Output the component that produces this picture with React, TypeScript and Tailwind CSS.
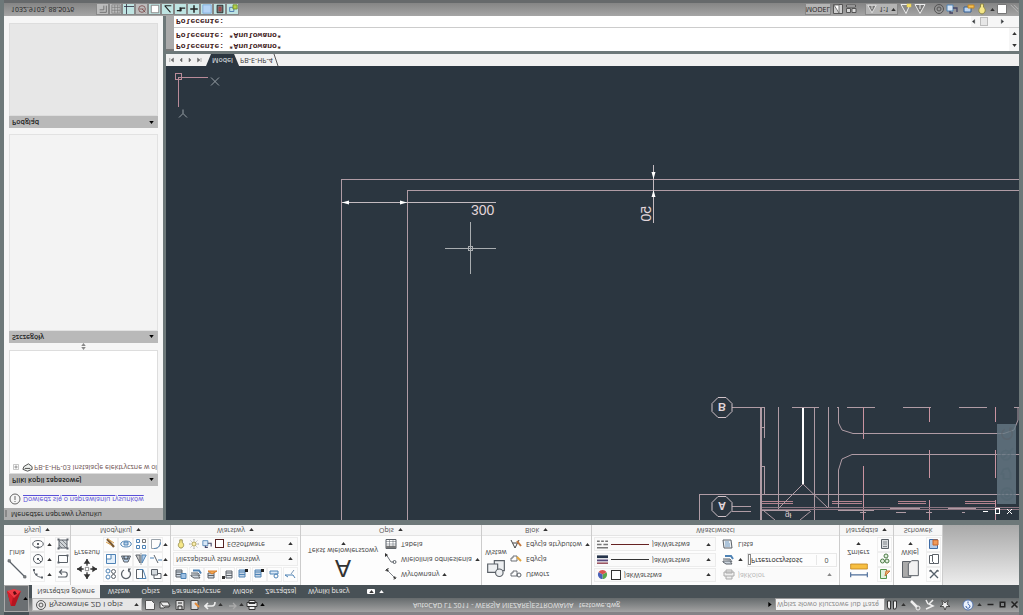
import type { ReactNode } from 'react';

type Shape = { d: string; c?: string; f?: string; w?: number };

const GREY = '#5b6168';
const BLUE = '#4f83b5';

function Icon({ shapes, size = 'size-3', className = '' }: { shapes: Shape[]; size?: string; className?: string }) {
  return (
    <svg viewBox="0 0 12 12" className={`shrink-0 ${size} ${className}`} aria-hidden="true">
      {shapes.map((s, i) => (
        <path key={i} d={s.d} stroke={s.c ?? GREY} fill={s.f ?? 'none'} strokeWidth={s.w ?? 1} />
      ))}
    </svg>
  );
}

function Caret({ up = false, className = 'text-[#333]' }: { up?: boolean; className?: string }) {
  return (
    <svg viewBox="0 0 6 4" className={`w-[5px] h-[3px] shrink-0 ${className}`} aria-hidden="true">
      <path d={up ? 'M0 4L3 0L6 4Z' : 'M0 0L3 4L6 0Z'} fill="currentColor" />
    </svg>
  );
}

const ic: Record<string, Shape[]> = {
  line: [{ d: 'M1.5 10.5L10.5 1.5', w: 0.7 }, { d: 'M.6 10.2h1.4v1.4H.6zM10 .6h1.4V2H10z', f: '#888', w: 0.4 }],
  arc: [{ d: 'M2 10C2 6 5 3 10 2.5' }, { d: 'M1 9h2v2H1zM9 1.5h2v2H9zM3.5 4.5h2v2h-2z', f: GREY, w: 0 }],
  circle: [{ d: 'M6 1.5a4.5 4.5 0 100 9a4.5 4.5 0 100-9M6 6L9 3' }, { d: 'M5 5h2v2H5z', f: GREY, w: 0 }],
  ellipse: [{ d: 'M6 2.5c7 0 7 7 0 7s-7-7 0-7' }, { d: 'M5 5h2v2H5zM5 1.5h2v2H5z', f: GREY, w: 0 }],
  pline: [{ d: 'M1 3h7c3 0 3 5 0 5H3M5 5.5L2.5 8L5 10.5', w: 1.2 }],
  rect: [{ d: 'M1.5 2.5h9v7h-9z' }, { d: 'M.5 1.5h2v2h-2zM9.500 8.500h2v2h-2z', f: GREY, w: 0 }],
  hatch: [{ d: 'M2 2h8v8H2z', f: '#cfd3d6' }, { d: 'M2 5l3-3M2 9l7-7M5 10l5-5', w: 0.7 }, { d: 'M.5.5h2v2h-2zM9.500.500h2v2h-2zM.5 9.500h2v2h-2zM9.500 9.500h2v2h-2z', f: GREY, w: 0 }],
  move: [{ d: 'M6 0v4M6 8v4M0 6h4M8 6h4', c: '#333', w: 0.8 }, { d: 'M6 0L4 2.800h4zM6 12l-2-2.800h4zM0 6l2.800-2v4zM12 6L9.200 4v4z', f: '#333', w: 0 }, { d: 'M5 5h2v2H5z', c: '#777', w: 0.5 }],
  copy: [{ d: 'M3 1a2 2 0 100 4a2 2 0 100-4M3 7a2 2 0 100 4a2 2 0 100-4', c: BLUE }, { d: 'M8.500 1.500a2 2 0 100 4a2 2 0 100-4M8.500 6.500a2 2 0 100 4a2 2 0 100-4' }],
  rotate: [{ d: 'M4 10A4.500 4.500 0 118 10', w: 1.3 }, { d: 'M8 7.500v4h3z', f: GREY, w: 0 }],
  stretch: [{ d: 'M1.500 1.500h6v9h-6z' }, { d: 'M4 1.500h7l-3 9H4', c: BLUE }],
  offset: [{ d: 'M4 1.500h7v5H4z' }, { d: 'M1.500 5h6v5.500h-6z', f: '#d5dade' }],
  scale: [{ d: 'M1.500 1.500h9v9h-9z', c: BLUE, f: '#e3effa' }, { d: 'M1.500 6h4.500v4.500H1.500z', f: '#fff', c: BLUE }],
  trim: [{ d: 'M1.500 9h9L8 3H4z', f: '#b9d1ea' }, { d: 'M4 9V6h4v3', c: '#333' }],
  mirror: [{ d: 'M5 2v8H.8z', f: '#ccc' }, { d: 'M7 2v8h4.200z', c: BLUE, f: '#b9d1ea' }, { d: 'M6 0v12', w: 0.6 }],
  breakk: [{ d: 'M0 7h4M8 5h4', c: BLUE }, { d: 'M4 10l4-8', w: 1 }],
  erase: [{ d: 'M2 11l7-8', c: '#7b5a33', w: 2.2 }, { d: 'M1 8l5-3M3 11l6-4', c: '#d89c45' }],
  explode: [{ d: 'M6 3c7 0 7 6 0 6s-7-6 0-6', c: BLUE }, { d: 'M4 5h4v3H4z', c: BLUE, f: '#b9d1ea' }],
  array: [{ d: 'M1.500 1.500h3v3h-3zM7.500 1.500h3v3h-3zM1.500 7.500h3v3h-3z', c: BLUE }, { d: 'M7.500 7.500h3v3h-3z', c: '#777' }],
  fillet: [{ d: 'M1.500 10.500v-9h3c4 0 6 3 6 9z', c: '#9aa2aa' }, { d: 'M4 1.500c4 0 6 2 6.500 6', c: BLUE }],
  lay: [{ d: 'M1 3h6v7H1zM1 5.500h6M1 8h6', f: '#cdd6df' }, { d: 'M6 1.500h5v5H6z', c: BLUE, f: '#9fc1e4' }],
  lay2: [{ d: 'M1 4l3-2h6L8 5H1zM1 7h7l2-3', f: '#cdd6df' }, { d: 'M3 9.500h6l2-3', c: BLUE, w: 2 }],
  lay3: [{ d: 'M2 2h6v5H2zM2 4.500h6', f: '#cdd6df' }, { d: 'M2 9l4-3l5 3z', c: '#d87f2d', f: '#f3aa55' }],
  lay4: [{ d: 'M4 2h6v7H4zM4 4.500h6M4 7h6', f: '#e2e6ea' }, { d: 'M0 1h3v3H0z', f: '#333', w: 0 }],
  lay5: [{ d: 'M2 3h6v7H2zM2 5.500h6M2 8h6', f: '#c3d3e4', c: BLUE }, { d: 'M8 8h3v3H8z', f: '#222', w: 0 }],
  lay6: [{ d: 'M1 6h8v3H1z', c: BLUE, f: '#dbe9f7' }, { d: 'M7 2a2 2 0 100 4a2 2 0 100-4', c: BLUE }],
  lay7: [{ d: 'M1 5h8l2-3M1 5l3-2', c: BLUE }, { d: 'M7 6l3 4', c: '#7a98b8' }],
  bulb: [{ d: 'M6 1c4 1 4 5 1.500 7v3h-3V8C2 6 2 2 6 1', c: '#8c8648', f: '#f6e788' }],
  sun: [{ d: 'M6 3.500a2.500 2.500 0 100 5a2.500 2.500 0 100-5', c: '#9b8f3f', f: '#fbeeb0' }, { d: 'M6 0v2M6 10v2M0 6h2M10 6h2M2 2l1 1M10 2L9 3M2 10l1-1M10 10L9 9', w: 0.7 }],
  lock: [{ d: 'M1 4h6v6H1z', c: BLUE, f: '#d9e7f6' }, { d: 'M7 7h4V3M4 4V2h3', c: '#446', w: 1.300 }],
  dim: [{ d: 'M1 11l9-9', w: 0.8 }, { d: 'M9 .500l2 2M.500 9l3 3', c: '#222', w: 1 }, { d: 'M8 2l3-1l-1 3zM2 8l-1 3l3-1z', f: '#333', w: 0 }],
  leader: [{ d: 'M9 3H6L1.500 10', w: 0.9 }, { d: 'M9.500 1.500a1.500 1.500 0 100 3a1.500 1.500 0 100-3' }, { d: 'M0 8v4l3-2z', f: '#333', w: 0 }],
  table: [{ d: 'M1 1.500h10v9H1z', f: '#fff' }, { d: 'M1 3h10', w: 2.500, c: '#777' }, { d: 'M1 6h10M1 8.500h10M4.500 3v7.500M8 3v7.500', w: 0.5 }],
  insert: [{ d: 'M1 4h6v5H1zM6 5h5v6H5V9', f: '#eef0f2', w: 0.7 }, { d: 'M8 1.500a2 2 0 100 4.500a2 2 0 100-4.500', w: 0.7, f: '#eef0f2' }],
  create: [{ d: 'M1 4h6v5H3V7H1z', w: 0.9 }, { d: 'M9 3a2 2 0 100 4a2 2 0 100-4' }],
  edit: [{ d: 'M1 4h6v5H3V7H1z', w: 0.9 }, { d: 'M7 8l4-4', c: '#e3a53c', w: 2 }],
  attr: [{ d: 'M1 10l4-8l4 8M3 7h4', c: '#444' }, { d: 'M7 9l4-5', c: '#c5793d', w: 2 }],
  weights: [{ d: 'M0 2h12', c: '#8a3a49', w: 1.5 }, { d: 'M0 5h12', c: '#56477a', w: 2 }, { d: 'M0 9h12', c: '#25344a', w: 3 }],
  ltypes: [{ d: 'M0 2.500h12M0 6h5M7 6h5M0 9.500h3M4.500 9.500h3M9 9.500h3', c: '#777', w: 1.500 }],
  transp: [{ d: 'M1 4l3-2h6L8 5H1zM1 7h7l2-3', f: '#cdd6df' }, { d: 'M3 10h6l2-3', c: BLUE, w: 2 }],
  list: [{ d: 'M2 2h8l-1 8H1z', f: '#edf0f3' }, { d: 'M3 4h5M3 6h5M3 8h4', c: BLUE, w: 0.8 }],
  printer: [{ d: 'M1 5h10v4H1zM3 5V2h6v3M3 8h6v3H3z', c: '#aaa', f: '#eee' }],
  measure: [{ d: 'M1 2.500h10M1 1v3M11 1v3', c: '#4f6f9a', w: 0.7 }, { d: 'M1 6h10v3H1z', c: '#c08520', f: '#f7bf41', w: 0.5 }],
  pick: [{ d: 'M1.500 1.500h6v9h-6z', c: '#55934c', f: '#dff0dc' }, { d: 'M6 4l5 5l-4 0z', c: '#c5793d', f: '#f0b070' }],
  group: [{ d: 'M3.500 2a2 2 0 100 4a2 2 0 100-4M8 2a2 2 0 100 4a2 2 0 100-4M7 7a2 2 0 100 4a2 2 0 100-4', c: '#4b7a45', f: '#e1efdf' }],
  calc: [{ d: 'M2.500 1.500h7v9h-7z', f: '#d8dbde' }, { d: 'M4 3.500h4M4 6h4M4 8h4', w: 0.7 }],
  paste: [{ d: 'M1.500 1h5v9.500h-5z', f: '#aaa', w: 0.6 }, { d: 'M5 2h6v9H7L5 9z', f: '#f2f2f2', w: 0.6 }],
  cut: [{ d: 'M2 2l8 8M10 2l-8 8', c: '#55606b', w: 1.300 }, { d: 'M1 9h3M8 9h3' }],
  pages: [{ d: 'M1.500 1.500h6v8h-6z', f: '#fff' }, { d: 'M4.500 3.500l2-2h4v9h-6z', f: '#fff' }],
  props: [{ d: 'M1.500 1.500h8v9h-8z', c: '#3f6ca6', f: '#b4cbe9' }, { d: 'M5 5h5v5H5z', c: '#c5642d', f: '#f09a5a' }],
  doc: [{ d: 'M1.500 1.500h9v6l-3 3h-6z', c: '#555', f: '#f3f3f3' }],
  open: [{ d: 'M1 9V3h4l1 1h4v1M1 9l3-4h7L9 9z', c: '#444', f: '#eee' }],
  save: [{ d: 'M2 1.500h8v9H2z', c: '#444', f: '#ddd' }, { d: 'M4 2v3h4V2M4 8h4', c: '#222' }],
  saveas: [{ d: 'M2 1.500h7v9H2z', c: '#444', f: '#ddd' }, { d: 'M6 8l4-4', c: '#e38c3c', w: 2 }],
  undo: [{ d: 'M4 2L1 5l3 3M1 5h7c2 0 3 1 3 4', c: '#eee', w: 1.600 }],
  redo: [{ d: 'M8 2l3 3l-3 3M11 5H4', c: '#aaa', w: 1.300 }],
  plot: [{ d: 'M1 4.500h10v4H1zM3 4.500v-3h6v3M3 7.500h6v3H3z', c: '#333', f: '#eee' }],
  binoc: [{ d: 'M1.500 10V4l1-2h2v8zM10.500 10V4l-1-2h-2v8z', c: '#333', f: '#eee' }],
  key: [{ d: 'M2 10l6-6', c: '#eee', w: 2.500 }, { d: 'M9 1a2 2 0 100 4a2 2 0 100-4', c: '#eee' }],
  sat: [{ d: 'M2 2l7 3l-4 2l4 4M4 7l-2 4', c: '#eee', w: 1.500 }],
  star: [{ d: 'M6 1l1.500 3.500h3.500l-3 2.300l1.200 3.700L6 8.200L2.800 10.500L4 6.800L1 4.500h3.500z', c: '#333', f: '#eee', w: 0.8 }],
  help: [{ d: 'M6 1a5 5 0 100 10a5 5 0 100-10', c: '#5575ae', f: '#eaf1fc' }, { d: 'M4 5c0-3 4-3 4 0c0 1-2 1-2 2.500M6 8v1.500', c: '#3259a5' }],
  gear: [{ d: 'M6 1.500a4.500 4.500 0 100 9a4.500 4.500 0 100-9M6 4a2 2 0 100 4a2 2 0 100-4', c: '#555' }],
  info: [{ d: 'M6 1a5 5 0 100 10a5 5 0 100-10M6 5v4M6 3v1', c: '#555', w: 0.9 }],
  plus: [{ d: 'M3 3h6v6H3z', c: '#aaa', w: 0.8 }, { d: 'M4 6h4M6 4v4', c: '#666', w: 0.8 }],
  dwg: [{ d: 'M1 4l5-2l5 2v3l-4 3l-5-3z', c: '#444', f: '#eef1ee' }, { d: 'M3 5h6', c: '#444' }],
  grid: [{ d: 'M1 1h10v10H1zM1 4.500h10M1 8h10M4.500 1v10M8 1v10', c: '#777', w: 0.8 }],
  snap: [{ d: 'M2 2h8v8M2 5h5v5', c: '#666', w: 1 }],
  ortho: [{ d: 'M3 0v12M0 9h12', c: '#334', w: 1 }],
  polar: [{ d: 'M6 2a4 4 0 100 8a4 4 0 100-8M6 6l4-4M3 6h5', c: '#7b4a4a' }],
  osnap: [{ d: 'M1.500 1.500h9v9h-9z', c: '#777', f: '#fff' }],
  track: [{ d: 'M2 10h8M2 10l7-8', c: '#222', w: 1.300 }],
  ducs: [{ d: 'M1 4h5v3h5M5 3v5', c: '#222', w: 1.600 }],
  dyn: [{ d: 'M6 1.500v9M1.500 6h9', c: '#222', w: 1.800 }],
  lwt: [{ d: 'M1 1h10v10H1z', c: '#7ba6d8', f: '#b4d3f5' }],
  qp: [{ d: 'M2.500 1.500h7v9h-7z', c: '#222', f: '#777' }, { d: 'M5 4h2v4H5z', c: '#b33' }],
  sc: [{ d: 'M2 3h5v5H2z', c: '#3d6ca8' }, { d: 'M6 6h5v5H6z', c: '#6c8a1f', f: '#b7cf4c' }],
  layout: [{ d: 'M1.500 1.500h9v9h-9z', c: '#555', f: '#ccc' }, { d: 'M2 10l5-8v8z', f: '#fff', c: '#777' }],
  views: [{ d: 'M1.500 2.500h4v4h-4zM7 2.500h4v4H7zM1.500 8h9v2h-9z', c: '#555', f: '#d8d8d8' }],
  scale1: [{ d: 'M1 10.500h10L6 1.500zM6 6v4', c: '#eee', f: '#777' }],
  scale2: [{ d: 'M1 10.500h9L6 1.500z', c: '#eee', f: '#888' }, { d: 'M7 8h4v3H7z', c: '#e5c94a', f: '#f5e26a', w: 0.500 }],
  tray: [{ d: 'M1 3h7v5H1z', c: '#335f95', f: '#bcd4ef' }, { d: 'M5 7h6v3H5z', c: '#c58722', f: '#f5c052' }],
  wheel: [{ d: 'M6 1a5 5 0 100 10a5 5 0 100-10M6 4a2 2 0 100 4a2 2 0 100-4', c: '#526671', w: 1.500 }],
  pan: [{ d: 'M3 10L1 6h2V2h6v5l-2 4z', c: '#526671', w: 1.300 }],
  zoom: [{ d: 'M5 1a4 4 0 100 8a4 4 0 100-8M8 8l3 3M2 2l6 6', c: '#526671', w: 1.300 }],
};

function Tool({ name, label }: { name: string; label: string }) {
  return (
    <button type="button" aria-label={label} className="flex size-[15px] items-center justify-center border border-[#efefef]">
      <Icon shapes={ic[name]} />
    </button>
  );
}

function Panel({ title, caret = true, className = '', children }: { title: string; caret?: boolean; className?: string; children: ReactNode }) {
  return (
    <section className={`flex shrink-0 flex-col border-r border-[#ccc] bg-[#fdfdfd] ${className}`}>
      <div className="flex flex-1 items-start gap-[2px] px-[2px] pt-[3px]">{children}</div>
      <h2 className="flex h-[11px] items-center justify-center gap-1 border-t border-[#e4e4e4] bg-[#f6f6f6] text-[#555]">
        {title}
        {caret && <Caret />}
      </h2>
    </section>
  );
}

function BigTool({ name, label, caret = false, className = '' }: { name: string; label: string; caret?: boolean; className?: string }) {
  return (
    <button type="button" className={`flex h-[45px] shrink-0 flex-col items-center gap-[2px] pt-[3px] ${className}`}>
      <Icon shapes={ic[name]} size="size-5" />
      <span>{label}</span>
      {caret && <Caret />}
    </button>
  );
}

function TextTool({ name, label, caret = false }: { name: string; label: string; caret?: boolean }) {
  return (
    <button type="button" className="flex h-[15px] items-center gap-[3px]">
      <Icon shapes={ic[name]} />
      <span className="pl-px">{label}</span>
      {caret && <Caret />}
    </button>
  );
}

function Combo({ label, value, disabled = false, before, className = '' }: { label: string; value: string; disabled?: boolean; before?: ReactNode; className?: string }) {
  return (
    <label className={`flex h-[14px] items-center gap-[3px] border border-[#ececec] bg-[#fafafa] pr-1 pl-[2px] ${className}`}>
      {before}
      <select aria-label={label} disabled={disabled} className="min-w-0 flex-1 appearance-none bg-transparent outline-none disabled:text-[#b5b5b5]">
        <option>{value}</option>
      </select>
      <Caret className={disabled ? 'text-[#888]' : 'text-[#333]'} />
    </label>
  );
}

const ribbonTabs = ['Wstaw', 'Opisz', 'Parametryczne', 'Widok', 'Zarządzaj', 'Wyniki pracy'];
const quickAccess = [
  ['doc', 'Nowy'],
  ['open', 'Otwórz'],
  ['save', 'Zapisz'],
  ['saveas', 'Zapisz jako'],
  ['undo', 'Cofnij'],
];
const layerTools = ['lay', 'lay2', 'lay3', 'lay4', 'lay5', 'lay5', 'lay6', 'lay7'];

function Header() {
  return (
    <header className="flex bg-[#485156]">
      <button type="button" aria-label="Menu aplikacji" className="mt-[3px] flex h-[27px] w-[25px] shrink-0 items-center justify-center gap-px border border-[#aaa] bg-[#6b6f72]">
        <svg viewBox="0 0 16 22" className="h-[22px] w-4 shrink-0" aria-hidden="true">
          <path d="M5 3L1 18l7-2l7 2L9 3z" fill="#b5141f" />
          <path d="M1 18l7-7l7 7l-7 2z" fill="#ee3b45" />
          <path d="M5 3L1 18l6-6z" fill="#d8202c" />
          <path d="M8 14l3 1l-2 3l-2-1z" fill="#5c0c12" />
        </svg>
        <Caret className="text-black" />
      </button>
      <div className="flex min-w-0 flex-1 flex-col">
        <div className="flex h-[17px] items-center border-t-[3px] border-[#858286] bg-linear-to-b from-[#a3a3a3] to-[#666b6d] pl-[3px]">
          <label className="flex h-[13px] w-[110px] items-center gap-[2px] border border-[#bbb] bg-[#e6e6e6] px-[2px]">
            <Icon shapes={ic.gear} />
            <select aria-label="Obszar roboczy" className="min-w-0 flex-1 appearance-none text-[8px] outline-none">
              <option>Rysowanie 2D i opis</option>
            </select>
            <Caret />
          </label>
          <div className="flex items-center gap-[2px] pl-[2px]">
            <div className="flex gap-[3px]">
              {quickAccess.map(([name, label]) => (
                <button key={name} type="button" aria-label={label}>
                  <Icon shapes={ic[name]} />
                </button>
              ))}
            </div>
            <Caret />
            <button type="button" aria-label="Ponów">
              <Icon shapes={ic.redo} />
            </button>
            <Caret />
            <button type="button" aria-label="Drukuj">
              <Icon shapes={ic.plot} />
            </button>
            <Caret className="text-black" />
          </div>
          <h1 className="flex-1 text-center whitespace-pre text-[#e4e4e4]">AutoCAD LT 2011 - WERSJA NIEZAREJESTROWANA   testowe.dwg</h1>
          <svg viewBox="0 0 4 6" className="mr-[3px] h-[5px] w-1" aria-hidden="true">
            <path d="M0 0L4 3L0 6Z" />
          </svg>
          <input aria-label="Szukaj" placeholder="Wpisz słowo kluczowe lub frazę" className="h-[13px] w-[110px] border border-[#999] bg-[#f4f4f4] px-px outline-none placeholder:text-[#888]" />
          <div className="flex items-center gap-[3px] pl-px">
            <Icon shapes={ic.binoc} />
            <Caret />
            <Icon shapes={ic.key} />
            <Icon shapes={ic.sat} />
            <Icon shapes={ic.star} />
            <Icon shapes={ic.help} className="ml-2" />
            <Caret />
          </div>
          <div className="flex items-center gap-[3px] pl-1">
            <button type="button" aria-label="Minimalizuj">
              <Icon shapes={[{ d: 'M2 6h8', c: '#222', w: 2 }]} size="size-[9px]" />
            </button>
            <button type="button" aria-label="Maksymalizuj">
              <Icon shapes={[{ d: 'M3 3h6v6H3z', c: '#222', w: 2 }]} size="size-[9px]" />
            </button>
            <button type="button" aria-label="Zamknij">
              <Icon shapes={[{ d: 'M2 2l8 8M10 2l-8 8', c: '#222', w: 2 }]} size="size-[9px]" />
            </button>
          </div>
        </div>
        <nav className="flex h-[13px] items-center gap-[18px] pl-[3px] text-[#e8e8e8]">
          <div className="flex items-center gap-3">
            <a href="#home" className="-mr-1 flex h-[13px] w-[68px] items-center justify-center bg-[#f4f4f4] text-[#444]">Narzędzia główne</a>
            {ribbonTabs.map(t => (
              <a key={t} href={`#${t}`}>{t}</a>
            ))}
          </div>
          <button type="button" aria-label="Minimalizuj wstążkę" className="flex items-center gap-1">
            <span className="flex h-[5px] w-2 items-center justify-center rounded-[1px] bg-white">
              <Caret />
            </span>
            <Caret className="text-white" />
          </button>
        </nav>
      </div>
    </header>
  );
}

function Ribbon() {
  return (
    <div className="flex h-[60px] bg-linear-to-b from-[#ededed] to-[#a9a9a9]">
      <Panel title="Rysuj" className="w-[67px]">
        <BigTool name="line" label="Linia" className="w-[22px]" />
        <div className="grid grid-cols-[15px_6px_15px] items-center gap-x-[2px]">
          <Tool name="arc" label="Łuk" /><Caret /><Tool name="pline" label="Polilinia" />
          <Tool name="circle" label="Okrąg" /><Caret /><Tool name="rect" label="Prostokąt" />
          <Tool name="ellipse" label="Elipsa" /><Caret /><Tool name="hatch" label="Kreskuj" />
        </div>
      </Panel>
      <Panel title="Modyfikuj" className="w-[100px]">
        <BigTool name="move" label="Przesuń" className="w-[28px]" />
        <div className="grid grid-cols-[15px_15px_15px_15px_5px] items-center">
          <Tool name="copy" label="Kopiuj" /><Tool name="rotate" label="Obróć" /><Tool name="stretch" label="Rozciągnij" /><Tool name="offset" label="Odsuń" /><Caret />
          <Tool name="scale" label="Skala" /><Tool name="trim" label="Utnij" /><Tool name="mirror" label="Lustro" /><Tool name="breakk" label="Przerwij" /><Caret />
          <Tool name="erase" label="Wymaż" /><Tool name="explode" label="Rozbij" /><Tool name="array" label="Szyk" /><Tool name="fillet" label="Zaokrąglij" /><Caret />
        </div>
      </Panel>
      <Panel title="Warstwy" className="w-[130px]">
        <div className="flex flex-1 flex-col">
          <div className="flex justify-between">
            {layerTools.map((t, i) => <Tool key={i} name={t} label={`Warstwa ${i + 1}`} />)}
          </div>
          <Combo label="Stan warstw" value="Niezapisany stan warstwy" className="my-[1px]" />
          <Combo
            label="Warstwa"
            value="EGSoftware"
            before={
              <>
                <Icon shapes={ic.bulb} size="size-[10px]" />
                <Icon shapes={ic.sun} size="size-[10px]" />
                <Icon shapes={ic.lock} size="size-[10px]" />
                <span className="size-[9px] border border-[#522] bg-white" />
              </>
            }
          />
        </div>
      </Panel>
      <Panel title="Opis" className="w-[181px]">
        <button type="button" className="flex h-[45px] w-[80px] shrink-0 flex-col items-center">
          <span className="font-['Liberation_Sans'] text-[24px] leading-[27px] text-[#333]">A</span>
          <span>Tekst wielowierszowy</span>
          <Caret />
        </button>
        <div>
          <TextTool name="dim" label="Wyrównany" caret />
          <TextTool name="leader" label="Wielolinia odniesienia" caret />
          <TextTool name="table" label="Tabela" />
        </div>
      </Panel>
      <Panel title="Blok" className="w-[110px]">
        <BigTool name="insert" label="Wstaw" className="w-[24px]" />
        <div>
          <TextTool name="create" label="Utwórz" />
          <TextTool name="edit" label="Edycja" />
          <TextTool name="attr" label="Edycja atrybutów" caret />
        </div>
      </Panel>
      <Panel title="Właściwości" caret={false} className="w-[248px]">
        <div className="grid flex-1 grid-cols-[122px_1fr] items-center gap-x-1 gap-y-[1px]">
          <Combo
            label="Kolor"
            value="JakWarstwa"
            before={
              <>
                <svg viewBox="0 0 12 12" className="size-[11px]" aria-hidden="true">
                  <path d="M6 6V1a5 5 0 014.300 7.500z" fill="#5aa84b" />
                  <path d="M6 6l4.300 2.500a5 5 0 01-8.600 0z" fill="#d9534f" />
                  <path d="M6 6L1.700 8.500A5 5 0 016 1z" fill="#4861b8" />
                </svg>
                <span className="size-[10px] border border-[#333] bg-white" />
              </>
            }
          />
          <Combo label="Styl wydruku" value="JakKolor" disabled className="border-transparent" before={<Icon shapes={ic.printer} />} />
          <Combo
            label="Szerokość linii"
            value="JakWarstwa"
            before={<><Icon shapes={ic.weights} size="size-[11px]" /><span className="h-px w-[38px] bg-[#333]" /></>}
          />
          <div className="flex items-center gap-1 pl-[2px]">
            <Icon shapes={ic.transp} />
            <Caret />
            <label className="flex h-[14px] flex-1 items-center border border-[#e8e8e8]">
              <span className="h-[11px] w-[3px] border border-[#888] bg-white" />
              <span className="flex-1 text-[#222]">Przezroczystość</span>
              <input defaultValue="0" className="w-5 border-l border-[#e8e8e8] text-center outline-none" />
            </label>
          </div>
          <Combo
            label="Rodzaj linii"
            value="JakWarstwa"
            before={<><Icon shapes={ic.ltypes} size="size-[11px]" /><span className="h-px w-[38px] bg-[#622]" /></>}
          />
          <div className="pl-[2px]">
            <TextTool name="list" label="Lista" />
          </div>
        </div>
      </Panel>
      <Panel title="Narzędzia" className="w-[54px]">
        <BigTool name="measure" label="Zmierz" caret className="w-[33px]" />
        <div>
          <Tool name="pick" label="Szybki wybór" />
          <Tool name="group" label="Grupa" />
          <Tool name="calc" label="Kalkulator" />
        </div>
      </Panel>
      <Panel title="Schowek" caret={false} className="w-[49px]">
        <BigTool name="paste" label="Wklej" caret className="w-[28px]" />
        <div>
          <Tool name="cut" label="Wytnij" />
          <Tool name="pages" label="Kopiuj do schowka" />
          <Tool name="props" label="Uzgodnij właściwości" />
        </div>
      </Panel>
    </div>
  );
}

function SectionTitle({ children }: { children: ReactNode }) {
  return (
    <h3 className="flex h-[12px] items-center justify-between bg-[#b9b9b9] px-[3px] pr-1 font-semibold text-[#222]">
      {children}
      <Caret up className="text-black" />
    </h3>
  );
}

function RecoveryPalette() {
  return (
    <aside className="flex w-[159px] shrink-0 flex-col bg-[#f6f6f6]">
      <h2 className="flex h-[12px] items-center gap-1 bg-[#aeaeae] pl-px text-[#222]">
        <span className="h-[7px] w-[2px] bg-[#888]" />
        Menedżer naprawy rysunku
      </h2>
      <div className="flex flex-1 flex-col px-[5px] pb-[7px]">
        <div className="flex h-[22px] items-center gap-[2px] pb-[5px]">
          <Icon shapes={ic.info} />
          <a href="#recovery" className="text-[#5a50d8] underline">Dowiedz się o naprawianiu rysunków</a>
        </div>
        <SectionTitle>Pliki kopii zapasowej</SectionTitle>
        <div className="flex-[123] border border-[#ddd] bg-white">
          <div className="flex items-center gap-px pl-px text-[#6b5050]">
            <Icon shapes={ic.plus} size="size-[10px]" />
            <Icon shapes={ic.dwg} size="size-[11px]" />
            PB-E-HP-03 Instalacje elektryczne w ol
          </div>
        </div>
        <div className="flex h-[7px] flex-col items-center justify-center gap-px">
          <Caret up className="text-[#888]" />
          <Caret className="text-[#888]" />
        </div>
        <SectionTitle>Szczegóły</SectionTitle>
        <div className="mb-[6px] flex-[196] border border-[#e2e2e2] bg-[#f3f3f3]" />
        <SectionTitle>Podgląd</SectionTitle>
        <div className="flex-[92] border border-[#ddd] bg-[#e7e7e7]" />
      </div>
    </aside>
  );
}

// geometry is in world units with y pointing up, labels in screen units
function Drawing() {
  return (
    <svg className="block h-full w-full" role="img" aria-label="Rysunek">
      <g transform="translate(-166 520) scale(1 -1)" fill="none" stroke="#b09ca5" shapeRendering="crispEdges">
        <path d="M341.500 520V179.500H1100M407.500 520V190.500H1100" />
        <path d="M342 202.500H496M653.500 165V223" stroke="#c4bbc0" />
        <path d="M445 248.500H496M470.500 222V274M468.500 246.500h4v4h-4z" stroke="#a9adb0" />
        <path d="M176 73.500h5.500v6h-6v-6zM179 77h29M178.500 77v30" stroke="#b98b99" />

        <path d="M732 407.500H765M732 506.500H751M732 511.500H751M699.500 520V494.500H1100" />
        <path d="M760.500 407V520M761.500 407V520M764.500 407V438M764.500 466V494M761 427.500h4M761 466.500h4" />
        <path d="M778.500 407V509M814.500 407V520M828.500 407V508" />
        <path d="M802.500 407V484M803.500 407V484" stroke="#fff" />
        <path d="M792 407.500h27M847 407.500h28M903 407.500h28M959 407.500h28M837 407.500h2M1014 407.500h86" />
        <path d="M863.500 407v32M863.500 466v54M929.500 407v15M929.500 450v28M929.500 500v20M995.500 407v15M995.500 450v28M995.500 500v20" stroke="#c993a0" />
        <path d="M762 501.500h31M762 503.500h31M832 501.500h30M832 503.500h30M898 501.500h28M898 503.500h28M965 501.500h30M965 503.500h30" stroke="#b4838f" />
        <path d="M762 507.500H1100M762 509.500H1100" stroke="#8d7682" />
        <path d="M762 510.500h48M838 510.500h36M890 508.500h30M948 508.500h28M860 512.500h6M896 512.500h10M926 512.500h6M962 512.500h3" />
        <path d="M983 511.500h5" stroke="#fff" />
        <path d="M995.500 508.500h4v5h-4z" stroke="#fff" />
      </g>
      <g transform="translate(-166 520) scale(1 -1)" fill="none" stroke="#b09ca5">
        <path d="M342 202.500l7-2v4zM407 202.500l-7-2v4zM653.500 179l-2-7h4zM653.500 190l-2 7h4z" fill="#fff" stroke="none" />
        <path d="M803 484L778 509M803 484L828 508M764 511L775 520M811 511L800 520" />
        <path d="M838.500 407V423L842 430L853 433.500H1004L1014 430L1018 420V407" />
        <path d="M838.500 508V470L842 459L852 454.500H1100" />
        <path d="M718 397.500h8l6 6v8l-6 6h-8l-6-6v-8zM718 496.500h8l6 6v8l-6 6h-8l-6-6v-8z" stroke="#d0c2c8" />
        <path d="M1007 509l5 5M1012 509l-5 5" stroke="#fff" />
        <path d="M211 77.500l8 8M219 77.500l-8 8M179 117.500l4-4l4 4M183 113.500v-4" stroke="#98a0a6" />
      </g>
      <g transform="translate(-166 0)" fill="#e2d6db" className="font-['Liberation_Sans']">
        <text x="471" y="315" fontSize="14">300</text>
        <text x="651" y="314" fontSize="14" transform="rotate(-90 651 314)">50</text>
        <text x="722" y="117" fontSize="11" fontWeight="bold" textAnchor="middle">B</text>
        <text x="722" y="18" fontSize="11" fontWeight="bold" textAnchor="middle">A</text>
        <text x="785" y="7" fontSize="8">gł</text>
      </g>
    </svg>
  );
}

function NavigationBar() {
  return (
    <div className="absolute top-4 right-[3px] flex h-20 w-[19px] flex-col items-center justify-around bg-[#667984]/80">
      {['wheel', 'pan', 'zoom', 'rotate'].map(n => (
        <button key={n} type="button" aria-label={n} className="opacity-50">
          <Icon shapes={ic[n]} size="size-[14px]" />
        </button>
      ))}
    </div>
  );
}

function SheetTabs() {
  return (
    <div className="flex h-[12px] items-center bg-[#f1f1f1] pl-[3px] text-[#333]">
      <div className="flex items-center gap-[3px]">
        {['M1.500 2v8M9 2L4 6l5 4z', 'M8 2L4 6l4 4z', 'M4 2l4 4l-4 4z', 'M3 2l5 4l-5 4zM10 2v8'].map((d, i) => (
          <button key={i} type="button" aria-label={`Nawigacja ${i + 1}`}>
            <Icon shapes={[{ d, c: '#666', f: '#666' }]} size="size-[6px]" />
          </button>
        ))}
      </div>
      <button type="button" className="ml-1 flex h-[12px] items-center bg-[#2b3640] px-[6px] font-semibold text-[#c5ccd1] [clip-path:polygon(0_0,100%_0,calc(100%-5px)_100%,5px_100%)]">Model</button>
      <button type="button" className="pl-px">PB-E-HP-4</button>
      <Icon shapes={[{ d: 'M1 12L5 0', c: '#555' }]} />
    </div>
  );
}

function CommandLine() {
  return (
    <div className="flex h-[35px] bg-white font-['Liberation_Mono',monospace] text-[8px] text-[#402020]">
      <div className="w-2 shrink-0 border-t-2 border-[#777] bg-[#aaa]" />
      <div className="flex min-w-0 flex-1 flex-col">
        <div className="flex h-6 justify-between border-b border-[#ccc] pl-[2px]">
          <div className="space-y-[2px] leading-[9px] font-bold">
            <p>Polecenie: *Anulowano*</p>
            <p>Polecenie: *Anulowano*</p>
          </div>
          <div className="flex w-[10px] flex-col items-center justify-between bg-[#f6f6f6] py-1">
            <Caret up />
            <Caret />
          </div>
        </div>
        <div className="flex h-[11px] items-center pl-[2px]">
          <label htmlFor="cmd" className="font-bold">Polecenie:</label>
          <input id="cmd" className="min-w-0 flex-1 pl-1 outline-none" />
          <div className="flex h-full w-12 items-center gap-1 bg-[#f6f6f6]">
            <Icon shapes={[{ d: 'M9 1L3 6l6 5z', f: '#333' }]} size="size-[5px]" />
            <span className="h-[9px] w-2 border border-[#bbb] bg-[#e6e6e6]" />
            <Icon shapes={[{ d: 'M3 1l6 5l-6 5z', f: '#333' }]} size="size-[5px]" className="ml-2" />
          </div>
        </div>
      </div>
    </div>
  );
}

const toggles = [
  { name: 'snap', label: 'Skok', on: false },
  { name: 'grid', label: 'Siatka', on: false },
  { name: 'ortho', label: 'Orto', on: true },
  { name: 'polar', label: 'Biegun', on: false },
  { name: 'osnap', label: 'Obiekt', on: true },
  { name: 'track', label: 'Śledzenie', on: true },
  { name: 'ducs', label: 'DLUW', on: true },
  { name: 'dyn', label: 'Dyn', on: true },
  { name: 'lwt', label: 'Szer', on: true },
  { name: 'qp', label: 'SW', on: true },
  { name: 'sc', label: 'Cykl', on: true },
];

function StatusBar() {
  return (
    <footer className="flex h-4 items-center border-b-[3px] border-[#66696b] bg-linear-to-b from-[#a5a5a5] to-[#858585] pl-[7px] text-[#222]">
      <span className="w-[85px]">1032.9103, 88.5076</span>
      <div className="flex">
        {toggles.map(t => (
          <button
            key={t.name}
            type="button"
            aria-label={t.label}
            aria-pressed={t.on}
            className={`flex h-[12px] w-[13px] items-center justify-center border border-[#888] ${t.on ? 'bg-[#bfe4e2]' : 'bg-[#bcbcbc]'}`}
          >
            <Icon shapes={ic[t.name]} size="size-[10px]" />
          </button>
        ))}
      </div>
      <div className="ml-auto flex items-center gap-px">
        <button type="button" className="h-[12px] border border-[#888] bg-[#b4b4b4]">MODEL</button>
        <Icon shapes={ic.layout} />
        <Icon shapes={ic.views} />
        <button type="button" className="ml-[7px] flex h-[12px] items-center gap-[2px] border border-[#888] bg-[#b4b4b4] px-px">
          <Icon shapes={ic.scale1} size="size-[10px]" />
          1:1
          <Caret />
        </button>
        <Icon shapes={ic.scale2} className="mx-px" />
        <Icon shapes={ic.scale1} />
        <Icon shapes={ic.gear} className="ml-[6px]" />
        <Icon shapes={ic.lock} />
        <Icon shapes={ic.tray} className="ml-1" />
        <Icon shapes={ic.bulb} className="mr-px" />
        <Caret />
        <Icon shapes={ic.osnap} />
        <Icon shapes={[{ d: 'M2 11l9-9M6 11l5-5', c: '#bbb' }]} size="size-[10px]" />
      </div>
    </footer>
  );
}

export default function App() {
  return (
    <div className="flex min-h-screen -scale-y-100 flex-col bg-[#6d7879] px-1 font-['Open_Sans','Liberation_Sans',sans-serif] text-[7px] leading-[10px] whitespace-nowrap text-[#444]">
      <Header />
      <Ribbon />
      <div className="flex flex-1 gap-[3px] pt-[5px]">
        <RecoveryPalette />
        <main className="flex min-w-0 flex-1 flex-col">
          <div className="relative flex flex-1 bg-[#2b3640]">
            <Drawing />
            <NavigationBar />
          </div>
          <SheetTabs />
          <div className="h-[3px]" />
          <CommandLine />
        </main>
      </div>
      <StatusBar />
    </div>
  );
}
